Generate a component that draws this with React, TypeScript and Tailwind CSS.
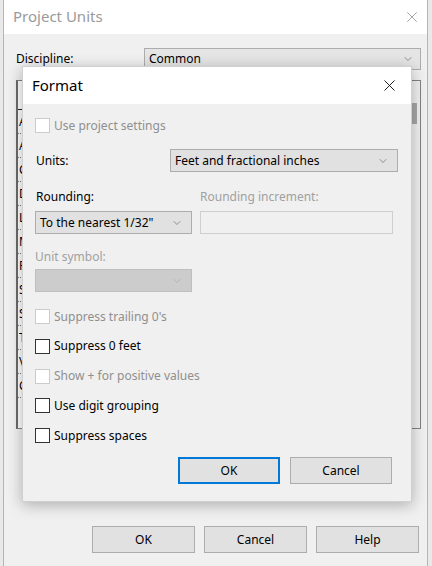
import { X, ChevronDown } from "lucide-react";

const units = [
  "Angle",
  "Area",
  "Cost per Area",
  "Distance",
  "Length",
  "Mass Density",
  "Rotation Angle",
  "Slope",
  "Speed",
  "Time",
  "Volume",
  "Currency",
];

function Combo({ value, className, disabled }: { value?: string; className: string; disabled?: boolean }) {
  return (
    <div
      className={`h-[23px] flex items-center justify-between border pl-[4px] pr-[8px] ${
        disabled ? "bg-[#cccccc] border-[#bfbfbf]" : "bg-[#e1e1e1] border-[#adadad]"
      } ${className}`}
    >
      <span className="text-black">{value}</span>
      <ChevronDown size={12} strokeWidth={1.2} className={disabled ? "text-[#a8a8a8]" : "text-[#555]"} />
    </div>
  );
}

function Check({ label, disabled }: { label: string; disabled?: boolean }) {
  return (
    <div className="flex items-center h-[15px]">
      <div
        className={`w-[15px] h-[15px] border bg-white ${disabled ? "border-[#cccccc]" : "border-[#333]"}`}
      />
      <span className={`ml-[4px] ${disabled ? "text-[#8f8f8f]" : "text-black"}`}>{label}</span>
    </div>
  );
}

function Btn({ label, primary, className }: { label: string; primary?: boolean; className?: string }) {
  return (
    <div
      className={`h-[27px] flex items-center justify-center bg-[#e1e1e1] ${
        primary ? "border-2 border-[#0078d7]" : "border border-[#adadad]"
      } ${className ?? "w-[102px]"}`}
    >
      {label}
    </div>
  );
}

export default function App() {
  return (
    <div className="relative w-[432px] h-[566px] overflow-hidden bg-[#e9e9e9] text-[12px] text-black font-['Noto_Sans','Liberation_Sans',sans-serif]">
      {/* Project Units window behind */}
      <div className="ml-[3px] mr-[4px] h-full flex flex-col border-l border-r border-[#b5b5b5] bg-[#f0f0f0]">
        <div className="h-[34px] shrink-0 bg-white flex items-center justify-between pl-[9px] pr-[6px]">
          <span className="text-[15px] text-[#9a9a9a] -mt-[2px]">Project Units</span>
          <X size={18} strokeWidth={1} className="text-[#8a8a8a]" />
        </div>
        <div className="flex items-center mt-[14px] pl-[12px] pr-[6px]">
          <span className="w-[128px]">Discipline:</span>
          <div className="flex-1 h-[22px] flex items-center justify-between border border-[#adadad] bg-[#e5e5e5] pl-[4px] pr-[6px]">
            <span>Common</span>
            <ChevronDown size={12} strokeWidth={1.2} className="text-[#555]" />
          </div>
        </div>
        <div className="mt-[10px] ml-[12px] mr-[6px] h-[349px] flex border border-[#828282] border-l-2 border-l-[#6a6a6a] bg-white overflow-hidden">
          <div className="flex-1">
            <div className="h-[29px] border-b border-[#222]" />
            {units.map((u) => (
              <div key={u} className="h-[24px] flex items-center border-b border-dotted border-[#777]">
                <div className="w-[6px] overflow-hidden whitespace-nowrap pl-[1px]">{u}</div>
              </div>
            ))}
          </div>
          <div className="w-[17px] bg-[#f0f0f0] border-l border-[#e0e0e0] pt-[22px] px-[3px]">
            <div className="h-[21px] bg-[#a8a8a8]" />
          </div>
        </div>
        <div className="mt-auto mb-[13px] flex justify-end gap-[9px] pr-[8px]">
          <Btn label="OK" className="w-[103px]" />
          <Btn label="Cancel" className="w-[103px]" />
          <Btn label="Help" className="w-[103px]" />
        </div>
      </div>

      {/* Format dialog */}
      <div className="absolute left-[22px] top-[66px] w-[390px] h-[436px] flex flex-col bg-[#f0f0f0] border border-[#d0d0d0] shadow-[0_3px_14px_rgba(0,0,0,0.28)]">
        <div className="h-[37px] shrink-0 bg-white flex items-center justify-between pl-[9px] pr-[12px]">
          <span className="text-[15px]">Format</span>
          <X size={19} strokeWidth={1.1} className="text-black" />
        </div>
        <div className="flex flex-col pl-[12px] pr-[13px]">
          <div className="mt-[14px]">
            <Check label="Use project settings" disabled />
          </div>
          <div className="mt-[16px] flex items-center">
            <span className="w-[135px] pl-[1px]">Units:</span>
            <Combo value="Feet and fractional inches" className="flex-1" />
          </div>
          <div className="mt-[17px] h-[16px] flex items-center">
            <span className="w-[165px] pl-[1px]">Rounding:</span>
            <span className="text-[#a0a0a0]">Rounding increment:</span>
          </div>
          <div className="mt-[6px] flex">
            <Combo value={'To the nearest 1/32"'} className="w-[157px]" />
            <div className="ml-[8px] w-[193px] h-[23px] border border-[#cfcfcf] bg-[#f0f0f0]" />
          </div>
          <div className="mt-[15px] h-[16px] flex items-center text-[#a0a0a0]">Unit symbol:</div>
          <div className="mt-[4px]">
            <Combo className="w-[157px]" disabled />
          </div>
          <div className="mt-[17px] flex flex-col gap-[14.75px]">
            <Check label="Suppress trailing 0's" disabled />
            <Check label="Suppress 0 feet" />
            <Check label="Show + for positive values" disabled />
            <Check label="Use digit grouping" />
            <Check label="Suppress spaces" />
          </div>
          <div className="mt-[14px] flex justify-end gap-[10px] pr-[6px]">
            <Btn label="OK" primary />
            <Btn label="Cancel" />
          </div>
        </div>
      </div>
    </div>
  );
}
